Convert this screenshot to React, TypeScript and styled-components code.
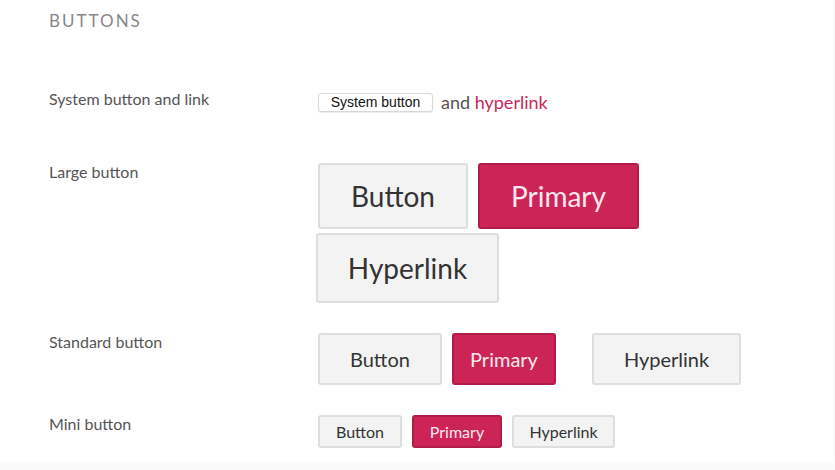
import React from "react";
import styled, { createGlobalStyle, css } from "styled-components";

const Global = createGlobalStyle`
  html, body { margin: 0; padding: 0; background: #fafafa; }
  body { font-family: Lato, "Open Sans", sans-serif; color: #444; }
`;

const Page = styled.main`
  width: 833px;
  height: 462px;
  background: #fff;
  box-sizing: border-box;
  padding: 11px 0 0 49px;
`;

const Heading = styled.h2`
  margin: 0 0 59px;
  font-size: 17px;
  line-height: 20px;
  font-weight: 400;
  letter-spacing: 2px;
  color: #888;
`;

const Row = styled.section<{ $gap?: number }>`
  display: grid;
  grid-template-columns: 269px 1fr;
  margin-bottom: ${(p) => p.$gap ?? 30}px;
`;

const Label = styled.div`
  font-size: 16px;
  line-height: 20px;
  margin-top: -1px;
  color: #555;
`;

const Buttons = styled.div<{ $width?: number }>`
  display: flex;
  flex-wrap: wrap;
  align-items: center;
  column-gap: 10px;
  row-gap: 4px;
  width: ${(p) => p.$width ?? 340}px;
`;

const Inline = styled.div`
  display: flex;
  align-items: center;
  height: 24px;
  gap: 8px;
  font-size: 18px;
  color: #555;
`;

const SystemButton = styled.button`
  height: 19px;
  width: 115px;
  padding: 0;
  font-family: "Liberation Sans", Arial, sans-serif;
  font-size: 14px;
  line-height: 17px;
  color: #111;
  background: #fff;
  border: 1px solid #d8d8d8;
  border-radius: 3px;
  box-shadow: 0 1px 1px rgba(0, 0, 0, 0.08);
`;

const Link = styled.a`
  color: #c8285a;
  text-decoration: none;
`;

type Size = "large" | "standard" | "mini";

const sizes = {
  large: css`height: 66px; font-size: 28px;`,
  standard: css`height: 52px; font-size: 20px;`,
  mini: css`height: 33px; font-size: 16px;`,
};

const Btn = styled.button<{ $size: Size; $w: number; $primary?: boolean; $h?: number; $ml?: number }>`
  ${(p) => sizes[p.$size]}
  ${(p) => (p.$h ? `height: ${p.$h}px;` : "")}
  width: ${(p) => p.$w}px;
  margin-left: ${(p) => p.$ml ?? 0}px;
  box-sizing: border-box;
  padding: 0;
  font-family: Lato, "Open Sans", sans-serif;
  border-radius: 3px;
  cursor: pointer;
  ${(p) =>
    p.$primary
      ? css`
          background: #cc2456;
          color: #fbe9ee;
          border: 2px solid #b21d48;
        `
      : css`
          background: #f3f3f3;
          color: #333;
          border: 2px solid #dedede;
        `}
`;

export default function App() {
  return (
    <>
      <Global />
      <Page>
        <Heading>BUTTONS</Heading>

        <Row $gap={49}>
          <Label>System button and link</Label>
          <Inline>
            <SystemButton>System button</SystemButton>
            <span>
              and <Link href="#">hyperlink</Link>
            </span>
          </Inline>
        </Row>

        <Row>
          <Label>Large button</Label>
          <Buttons>
            <Btn $size="large" $w={150}>Button</Btn>
            <Btn $size="large" $w={161} $primary>Primary</Btn>
            <Btn $size="large" $w={183} $h={70} $ml={-2}>Hyperlink</Btn>
          </Buttons>
        </Row>

        <Row>
          <Label>Standard button</Label>
          <Buttons $width={480}>
            <Btn $size="standard" $w={124}>Button</Btn>
            <Btn $size="standard" $w={104} $primary>Primary</Btn>
            <Btn $size="standard" $w={149} $ml={26}>Hyperlink</Btn>
          </Buttons>
        </Row>

        <Row>
          <Label>Mini button</Label>
          <Buttons>
            <Btn $size="mini" $w={84}>Button</Btn>
            <Btn $size="mini" $w={90} $primary>Primary</Btn>
            <Btn $size="mini" $w={103}>Hyperlink</Btn>
          </Buttons>
        </Row>
      </Page>
    </>
  );
}
